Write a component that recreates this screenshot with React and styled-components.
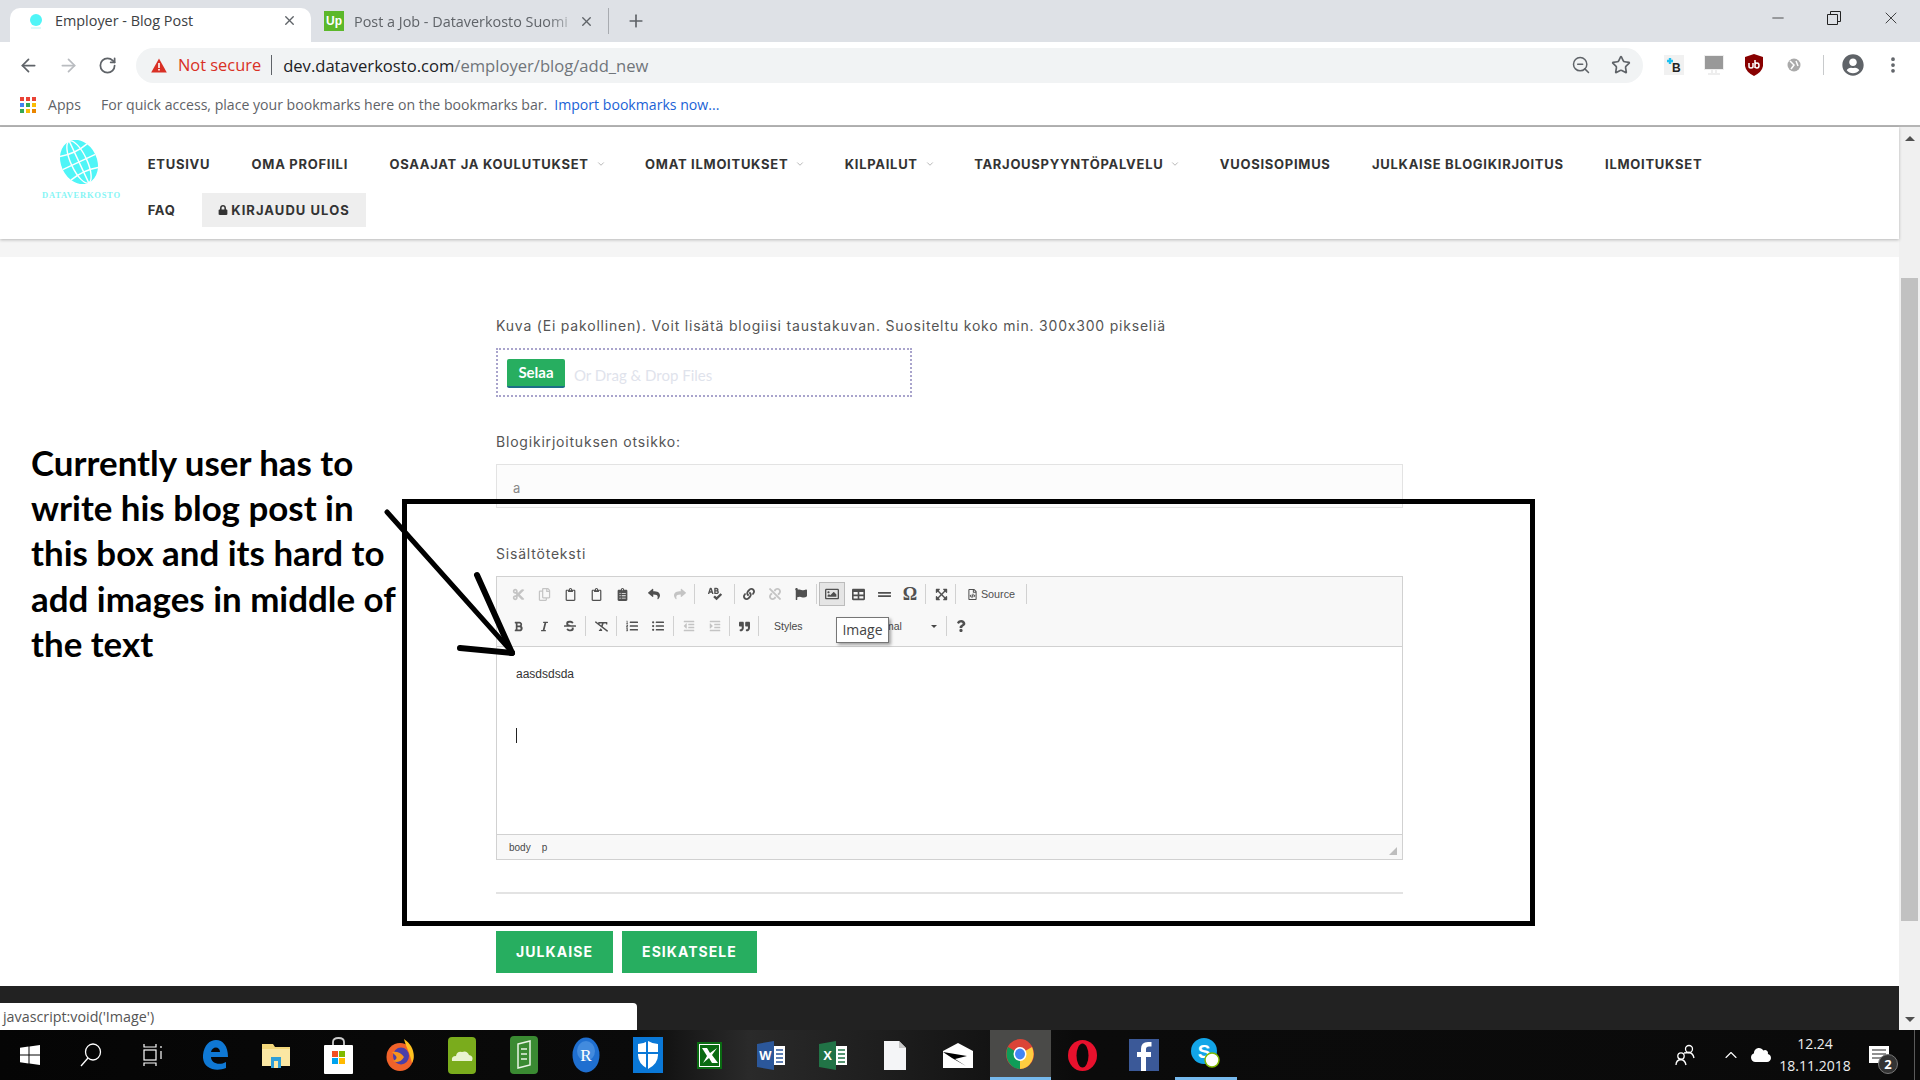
import React from 'react'
import styled, { createGlobalStyle } from 'styled-components'
import { ArrowLeft, ArrowRight, RotateCw, Star, ZoomOut, X, Plus, Minus, ChevronUp, MoreVertical, ChevronDown } from 'lucide-react'
import {
  FaCut, FaRegCopy, FaRegClipboard, FaClipboardList, FaReply, FaShare, FaSpellCheck, FaLink, FaUnlink, FaFlag, FaRegImage,
  FaTable, FaExpandArrowsAlt, FaRegFileCode, FaBold, FaItalic, FaStrikethrough, FaRemoveFormat, FaListOl, FaListUl,
  FaOutdent, FaIndent, FaQuoteRight, FaQuestion, FaGripLines, FaUserCircle, FaCloud, FaLock
} from 'react-icons/fa'

const GlobalStyle = createGlobalStyle`
  html, body {
    margin: 0;
    height: 1080px;
    overflow: hidden;
    background: #fff;
    font-family: "Open Sans", "Liberation Sans", sans-serif;
  }
  * { box-sizing: border-box; }
`

const Screen = styled.div`
  position: relative;
  width: 1920px;
  height: 1080px;
  display: flex;
  flex-direction: column;
  overflow: hidden;
`

/* browser chrome */
const TabStrip = styled.div`
  height: 42px;
  background: #dee1e6;
  display: flex;
  align-items: flex-end;
  padding-left: 10px;
  flex-shrink: 0;
`
const ActiveTab = styled.div`
  width: 301px;
  height: 34px;
  background: #fff;
  border-radius: 10px 10px 0 0;
  display: flex;
  align-items: center;
  padding: 0 14px 9px 17px;
  font-size: 14.4px;
  color: #3c4043;
`
const InactiveTab = styled.div`
  width: 298px;
  height: 26px;
  margin-bottom: 8px;
  display: flex;
  align-items: center;
  padding: 0 14px 0 13px;
  font-size: 14.4px;
  color: #5f6368;
  border-right: 1px solid #a8abb0;
`
const TabTitle = styled.span`
  flex: 1;
  margin-left: ${p => p.$indent}px;
  white-space: nowrap;
  overflow: hidden;
  mask-image: ${p => (p.$fade ? 'linear-gradient(90deg, #000 86%, transparent 100%)' : 'none')};
`
const UpFavicon = styled.span`
  width: 20px;
  height: 20px;
  background: #5cb82a;
  color: #fff;
  font: 700 12px "Liberation Sans", sans-serif;
  display: flex;
  align-items: center;
  justify-content: center;
  flex-shrink: 0;
`
const NewTab = styled.div`
  margin: 0 0 8px 17px;
  height: 26px;
  display: flex;
  align-items: center;
  color: #5f6368;
`
const WindowControls = styled.div`
  margin-left: auto;
  height: 42px;
  display: flex;
  align-items: center;
  padding-bottom: 7px;
  padding-right: 19px;
  gap: 38px;
  color: #222;
`
const Toolbar = styled.div`
  height: 44px;
  background: #fff;
  display: flex;
  align-items: center;
  padding: 2px 0 0 18px;
  flex-shrink: 0;
`
const NavButton = styled.div`
  width: 40px;
  display: flex;
  color: ${p => (p.$off ? '#b9bcc0' : '#5f6368')};
`
const Omnibox = styled.div`
  width: 1507px;
  height: 35px;
  margin-left: -2px;
  background: #f1f3f4;
  border-radius: 18px;
  display: flex;
  align-items: center;
  padding: 0 12px 0 15px;
`
const NotSecure = styled.span`
  color: #d93025;
  font-size: 16.4px;
  margin-left: 11px;
  padding-right: 10px;
  border-right: 1px solid #5f6368;
  line-height: 20px;
`
const Url = styled.span`
  color: #70757a;
  font-size: 16.6px;
  margin-left: 11px;
  flex: 1;
  b { font-weight: 400; color: #202124; }
`
const OmniIcons = styled.div`
  display: flex;
  gap: 20px;
  color: #5f6368;
`
const Extensions = styled.div`
  display: flex;
  align-items: center;
  margin-left: 11px;
`
const ExtSlot = styled.div`
  width: 40px;
  height: 24px;
  display: flex;
  align-items: center;
  justify-content: center;
  color: #5f6368;
`
const ExtDivider = styled.div`
  width: 1px;
  height: 20px;
  background: #c8cacc;
  margin: 0 9px;
`
const BookmarksBar = styled.div`
  height: 41px;
  background: #fff;
  border-bottom: 2px solid #b5b5b5;
  display: flex;
  align-items: center;
  padding: 0 0 2px 20px;
  font-size: 14.1px;
  color: #5f6368;
  flex-shrink: 0;
`
const AppsGrid = styled.div`
  width: 16px;
  height: 16px;
  display: grid;
  grid-template-columns: repeat(3, 4px);
  grid-auto-rows: 4px;
  gap: 2px;
  margin-right: 12px;
`
const AppsDot = styled.i`
  background: ${p => p.$c};
`
const BookmarkHint = styled.span`
  margin-left: 20px;
`
const ImportLink = styled.span`
  color: #1a62d6;
  margin-left: 7px;
`

/* page */
const Viewport = styled.div`
  flex: 1;
  display: flex;
  min-height: 0;
`
const Page = styled.div`
  flex: 1;
  display: flex;
  flex-direction: column;
  background: #fff;
  min-width: 0;
`
const Header = styled.header`
  height: 112px;
  display: flex;
  background: #fff;
  box-shadow: 0 1px 3px rgba(0, 0, 0, 0.25);
  position: relative;
`
const LogoBlock = styled.div`
  width: 127px;
  padding: 13px 0 0 42px;
  display: flex;
  flex-direction: column;
  align-items: flex-start;
`
const GlobeWrap = styled.div`
  margin-left: 14px;
  height: 44px;
`
const LogoText = styled.span`
  font: 700 8.5px "Liberation Serif", serif;
  letter-spacing: 0.75px;
  color: #86f5f5;
  margin-top: 6px;
  white-space: nowrap;
`
const Nav = styled.nav`
  flex: 1;
  display: flex;
  flex-wrap: wrap;
  align-content: flex-start;
  row-gap: 12px;
  padding: 20px 150px 0 0;
`
const NavItem = styled.a`
  height: 34px;
  display: flex;
  align-items: center;
  padding: 0 ${p => (p.$boxed ? 16 : 20.7)}px;
  margin-left: ${p => (p.$boxed ? 6 : 0)}px;
  background: ${p => (p.$boxed ? '#eeeeee' : 'transparent')};
  font: 700 13px "Inter", sans-serif;
  letter-spacing: ${p => (p.$boxed ? 1.05 : 0.72)}px;
  color: #333;
  white-space: nowrap;
`
const NavChevron = styled(ChevronDown)`
  margin: 0 -2px 0 7px;
`
const LockIcon = styled(FaLock)`
  margin-right: 3px;
`
const Strip = styled.div`
  height: 18px;
  background: #f5f5f5;
`
const Content = styled.main`
  flex: 1;
  padding: 59px 0 0 496px;
`
const Label = styled.div`
  font: 400 14px/20px "Inter", sans-serif;
  letter-spacing: 0.8px;
  color: #555;
  height: 20px;
  white-space: nowrap;
`
const DropZone = styled.div`
  width: 416px;
  height: 49px;
  margin: 12px 0 35px;
  border: 2px dotted #a9a4cc;
  padding: 9px;
  display: flex;
  align-items: flex-start;
`
const BrowseButton = styled.div`
  width: 58px;
  height: 29px;
  background: #27ae60;
  border-bottom: 2px solid #1c6f87;
  border-radius: 2px;
  color: #fff;
  font: 700 15px/26px "Lato", sans-serif;
  text-align: center;
`
const DropHint = styled.span`
  margin-left: 9px;
  font: 400 15px/32px "Lato", sans-serif;
  color: #dfe3ec;
`
const TitleInput = styled.div`
  width: 907px;
  height: 44px;
  margin: 12px 0 36px;
  background: #fcfcfc;
  border: 1px solid #e3e3e3;
  padding: 12px 16px;
  font: 400 13px/22px "Inter", sans-serif;
  color: #888;
`
const Editor = styled.div`
  width: 907px;
  height: 284px;
  margin-top: 12px;
  border: 1px solid #d1d1d1;
  display: flex;
  flex-direction: column;
`
const EditorTop = styled.div`
  height: 70px;
  background: #f8f8f8;
  border-bottom: 1px solid #d1d1d1;
  padding: 5px 0 0 8px;
  flex-shrink: 0;
  position: relative;
`
const ToolRow = styled.div`
  height: 24px;
  margin-bottom: 8px;
  display: flex;
  align-items: center;
`
const ToolButton = styled.span`
  width: ${p => p.$w || 26}px;
  height: 24px;
  display: flex;
  align-items: center;
  justify-content: center;
  gap: 3px;
  flex-shrink: 0;
  color: ${p => (p.$off ? '#c4c4c4' : '#505050')};
  background: ${p => (p.$on ? '#e5e5e5' : 'transparent')};
  box-shadow: ${p => (p.$on ? 'inset 0 0 0 1px #bcbcbc' : 'none')};
  font: ${p => (p.$text ? '400 10.8px "Liberation Sans", sans-serif' : '700 18px "Liberation Serif", serif')};
`
const ToolSep = styled.span`
  width: 1px;
  height: 20px;
  background: #d1d1d1;
  margin: 0 ${p => p.$m ?? 1}px;
  flex-shrink: 0;
`
const Combo = styled.span`
  width: ${p => p.$w}px;
  font: 400 10.5px "Liberation Sans", sans-serif;
  color: #474747;
  padding-left: ${p => p.$pad}px;
  flex-shrink: 0;
  display: flex;
  align-items: center;
`
const Caret = styled.i`
  width: 0;
  height: 0;
  margin-left: auto;
  margin-right: 8px;
  border-left: 3px solid transparent;
  border-right: 3px solid transparent;
  border-top: 3px solid #474747;
`
const Tooltip = styled.div`
  position: absolute;
  left: 339px;
  top: 40px;
  width: 53px;
  height: 26px;
  background: #fff;
  border: 1px solid #767676;
  box-shadow: 2px 2px 3px rgba(0, 0, 0, 0.35);
  font: 400 14px/24px "Open Sans", sans-serif;
  color: #444;
  text-align: center;
`
const EditorBody = styled.div`
  flex: 1;
  background: #fff;
  padding: 20px 19px;
  font: 400 12px/14px "Liberation Sans", sans-serif;
  color: #333;
`
const Caretbar = styled.div`
  width: 1px;
  height: 15px;
  background: #222;
  margin-top: 47px;
`
const EditorBottom = styled.div`
  height: 25px;
  background: #f8f8f8;
  border-top: 1px solid #d1d1d1;
  display: flex;
  align-items: center;
  padding: 0 5px 0 12px;
  gap: 11px;
  font: 400 10px "Liberation Sans", sans-serif;
  color: #484848;
  flex-shrink: 0;
`
const ResizeGrip = styled.i`
  margin: 8px 0 0 auto;
  width: 0;
  height: 0;
  border-left: 8px solid transparent;
  border-bottom: 8px solid #bdbdbd;
`
const Rule = styled.div`
  width: 907px;
  height: 2px;
  background: #e3e3e3;
  margin: 32px 0 37px;
`
const Actions = styled.div`
  display: flex;
  gap: 9px;
`
const ActionButton = styled.div`
  width: ${p => p.$w}px;
  height: 42px;
  background: #27ae60;
  color: #fff;
  font: 700 14px/42px "Inter", sans-serif;
  letter-spacing: 1.05px;
  text-align: center;
`
const Footer = styled.footer`
  height: 44px;
  background: #222;
  flex-shrink: 0;
`
const Scrollbar = styled.div`
  width: 21px;
  background: #f0f0f0;
  display: flex;
  flex-direction: column;
  align-items: center;
  flex-shrink: 0;
`
const ScrollThumb = styled.div`
  width: 17px;
  height: 643px;
  margin-top: 129px;
  background: #c1c1c1;
`
const ScrollEnd = styled.div`
  margin-top: ${p => (p.$bottom ? 'auto' : '0')};
  height: 22px;
  display: flex;
  align-items: center;
  &::before {
    content: '';
    border-left: 5px solid transparent;
    border-right: 5px solid transparent;
    border-bottom: ${p => (p.$bottom ? '0' : '5px solid #505050')};
    border-top: ${p => (p.$bottom ? '5px solid #505050' : '0')};
  }
`
const StatusBubble = styled.div`
  position: absolute;
  left: 0;
  top: 1003px;
  width: 637px;
  height: 27px;
  background: #fff;
  border-top-right-radius: 4px;
  padding-left: 3px;
  font: 400 14.3px/27px "Open Sans", sans-serif;
  color: #555;
`

/* annotation over the page */
const Note = styled.div`
  position: absolute;
  left: 31px;
  top: 440px;
  width: 372px;
  font: 700 34.9px/45.2px "Lato", sans-serif;
  color: #000;
`
const Frame = styled.div`
  position: absolute;
  left: 402px;
  top: 499px;
  width: 1133px;
  height: 427px;
  border: 5px solid #000;
  pointer-events: none;
`
const ArrowOverlay = styled.svg`
  position: absolute;
  left: 380px;
  top: 500px;
  width: 150px;
  height: 170px;
`

/* taskbar */
const Taskbar = styled.div`
  height: 50px;
  background: linear-gradient(90deg, #050505 0%, #0a0a0a 33%, #2a2a2a 39%, #1a1a1a 48%, #0b0b0b 56%, #0a0a0a 100%);
  display: flex;
  align-items: center;
  flex-shrink: 0;
  position: relative;
`
const TaskSlot = styled.div`
  width: ${p => p.$w || 61.85}px;
  height: 50px;
  display: flex;
  align-items: center;
  justify-content: center;
  flex-shrink: 0;
  background: ${p => (p.$active ? '#4a4a48' : 'transparent')};
  border-bottom: ${p => (p.$open ? '3px solid #76b9ed' : '0')};
  color: #fff;
`
const Tray = styled.div`
  margin: 0 5px 0 auto;
  display: flex;
  align-items: center;
  height: 50px;
  color: #fff;
  padding-right: 12px;
  border-right: 1px solid #5a5a5a;
`
const TrayChevron = styled(ChevronUp)`
  margin-left: 26px;
`
const TrayCloud = styled(FaCloud)`
  margin-left: 10px;
`
const Clock = styled.div`
  width: 82px;
  margin-left: 3px;
  text-align: center;
  font: 400 14px/22px "Open Sans", sans-serif;
  color: #eee;
`
const Notif = styled.div`
  position: relative;
  width: 46px;
  height: 50px;
  display: flex;
  align-items: center;
  padding-left: 13px;
`
const NotifBadge = styled.span`
  position: absolute;
  left: 22px;
  top: 24px;
  width: 20px;
  height: 20px;
  border-radius: 50%;
  background: #333;
  border: 1px solid #777;
  font: 700 13px/18px "Open Sans", sans-serif;
  color: #fff;
  text-align: center;
`

const Globe = () => (
  <svg width="46" height="44" viewBox="0 0 46 44">
    <g transform="rotate(-25 23 22)">
      <ellipse cx="23" cy="22" rx="18" ry="23" fill="#4ff5f7" />
      <g fill="none" stroke="#fff" strokeWidth="1.4">
        <ellipse cx="23" cy="22" rx="8" ry="23" />
        <path d="M23 -1V45" />
        <path d="M5 22H41M8 9Q23 13 38 9M8 35Q23 31 38 35" />
      </g>
    </g>
  </svg>
)

const NAV = [
  ['ETUSIVU'], ['OMA PROFIILI'], ['OSAAJAT JA KOULUTUKSET', 1], ['OMAT ILMOITUKSET', 1], ['KILPAILUT', 1],
  ['TARJOUSPYYNTÖPALVELU', 1], ['VUOSISOPIMUS'], ['JULKAISE BLOGIKIRJOITUS'], ['ILMOITUKSET'], ['FAQ'],
]

const Warn = () => (
  <svg width="16" height="15" viewBox="0 0 16 15"><path d="M8 0.5L15.8 14.5H0.2Z" fill="#d93025" /><path d="M7.2 5H8.8V10H7.2ZM7.2 11H8.8V12.6H7.2Z" fill="#fff" /></svg>
)

const Shield = () => (
  <svg width="20" height="22" viewBox="0 0 20 22">
    <path d="M10 0L19 3V12Q18 18 10 22Q2 18 1 12V3Z" fill="#800" />
    <path d="M5 9V12.5Q5 14 7 14T9 12.5V9M11 6V14M11 11Q11 9 13 9T15 11.500T13 14T11 12" fill="none" stroke="#fff" strokeWidth="1.5" />
  </svg>
)

const Monitor = () => (
  <svg width="20" height="20" viewBox="0 0 20 20">
    <rect x="0.5" y="0.5" width="19" height="14" fill="#999" stroke="#eee" />
    <path d="M8 15V18M12 15V18M4 19H16" stroke="#ddd" />
  </svg>
)

const ExtB = () => (
  <svg width="20" height="20" viewBox="0 0 20 20">
    <rect width="20" height="20" fill="#f1f1f1" />
    <path d="M6 3V9M3 6H9" stroke="#1ec0f0" strokeWidth="2.4" />
    <text x="8" y="17" fontFamily="Liberation Sans" fontWeight="700" fontSize="12" fill="#222">B</text>
  </svg>
)

const Windows = () => (
  <svg width="20" height="20" viewBox="0 0 20 20" fill="#fff">
    <path d="M0 2.800L8.500 1.600V9.500H0ZM9.500 1.500L20 0V9.500H9.500ZM0 10.500H8.500V18.400L0 17.200ZM9.500 10.500H20V20L9.500 18.500Z" />
  </svg>
)
const SearchGlass = () => (
  <svg width="22" height="24" viewBox="0 0 22 24" fill="none" stroke="#fff" strokeWidth="1.3">
    <ellipse cx="13" cy="9" rx="7.500" ry="8" />
    <path d="M8 15L1 23" />
  </svg>
)
const TaskView = () => (
  <svg width="20" height="24" viewBox="0 0 20 24" fill="none" stroke="#fff" strokeWidth="1.2">
    <rect x="1" y="7" width="12" height="10" />
    <path d="M1 1V4H13V1M1 23V20H13V23M18 3V5M18 8V16" />
  </svg>
)
const EdgeLogo = () => (
  <svg width="26" height="30" viewBox="0 0 26 30">
    <path d="M1 15C2 5 8 0 14 0C21 0 26 6 26 17H9C9 23 17 26 24 22V28C14 32 2 29 1 18C1 17 1 16 1 15ZM9 12H18C18 6 10 6 9 12Z" fill="#0f78d4" />
  </svg>
)
const Folder = () => (
  <svg width="28" height="26" viewBox="0 0 28 26">
    <path d="M0 2H11L13 5H28V24H0Z" fill="#f3d77a" />
    <path d="M0 7H28V24H0Z" fill="#fbe7a3" />
    <path d="M9 15H19V26H9Z" fill="#2f9fd8" />
    <path d="M12 19H16V26H12Z" fill="#fbe7a3" />
  </svg>
)
const Store = () => (
  <svg width="29" height="37" viewBox="0 0 29 37">
    <path d="M9 12V5Q9 1 14.500 1T20 5V12" fill="none" stroke="#ccc" strokeWidth="1.800" />
    <rect y="8" width="29" height="29" rx="1" fill="#fff" />
    <rect x="8" y="14" width="6" height="6" fill="#f25022" />
    <rect x="15" y="14" width="6" height="6" fill="#7fba00" />
    <rect x="8" y="21" width="6" height="6" fill="#00a4ef" />
    <rect x="15" y="21" width="6" height="6" fill="#ffb900" />
  </svg>
)
const Firefox = () => (
  <svg width="28" height="32" viewBox="0 0 28 32">
    <ellipse cx="14" cy="18" rx="13.500" ry="14" fill="#f0622a" />
    <path d="M18 0C27 6 30 16 26 24C24 14 20 8 18 0Z" fill="#ffc21f" />
    <ellipse cx="15" cy="17" rx="8" ry="8.500" fill="#4a3fa8" />
    <path d="M6 13Q14 12 18 18Q14 25 7 22Q12 20 10 17Q8 15 6 13Z" fill="#f7941d" />
  </svg>
)
const GreenCloud = () => (
  <svg width="28" height="37" viewBox="0 0 28 37">
    <rect width="28" height="37" rx="4" fill="#7aac1c" />
    <path d="M4 24Q3 19 8 19Q9 14 14 15Q19 13 21 18Q26 19 24 24Z" fill="#e8f3d0" />
  </svg>
)
const GreenBook = () => (
  <svg width="28" height="38" viewBox="0 0 28 38">
    <rect width="28" height="38" rx="4" fill="#3a8a32" />
    <path d="M8 8L20 5V29L8 32ZM11 13H17M11 18H17M11 23H17" fill="none" stroke="#e9f4e5" strokeWidth="1.500" />
  </svg>
)
const RLogo = () => (
  <svg width="28" height="36" viewBox="0 0 28 36">
    <ellipse cx="14" cy="18" rx="13.500" ry="17.500" fill="#1f6fd0" />
    <ellipse cx="14" cy="14" rx="9" ry="10" fill="#5fa2ea" opacity="0.55" />
    <text x="14" y="24" textAnchor="middle" fontFamily="Liberation Serif" fontSize="17" fill="#fff">R</text>
  </svg>
)
const Defender = () => (
  <svg width="30" height="36" viewBox="0 0 30 36">
    <rect width="30" height="36" fill="#0a78d7" />
    <path d="M15 4Q20 7 25 7V18Q25 27 15 32Q5 27 5 18V7Q10 7 15 4Z" fill="#fff" />
    <path d="M14 4V32M5 16H25" stroke="#0a78d7" strokeWidth="2" />
  </svg>
)
const ExcelOld = () => (
  <svg width="25" height="27" viewBox="0 0 25 27">
    <rect x="1" y="1" width="23" height="25" fill="#fff" stroke="#0a6b12" strokeWidth="2" />
    <path d="M3 3H22V24H3Z" fill="#0a6b12" />
    <path d="M5 6H10L13 11L20 6L15 13L21 21H15L12 16L6 21L10 14Z" fill="#fff" />
  </svg>
)
const OfficeDoc = ({ color, letter }) => (
  <svg width="28" height="29" viewBox="0 0 28 29">
    <path d="M16 5H28V24H16Z" fill="#fff" />
    <path d="M19 9H26M19 13H26M19 17H26M19 21H26" stroke={color} strokeWidth="1.500" />
    <path d="M0 3L17 0V29L0 26Z" fill={color} />
    <text x="8.500" y="19" textAnchor="middle" fontFamily="Liberation Sans" fontWeight="700" fontSize="13" fill="#fff">{letter}</text>
  </svg>
)
const BlankDoc = () => (
  <svg width="22" height="29" viewBox="0 0 22 29">
    <path d="M0 0H15L22 7V29H0Z" fill="#f4f5f7" />
    <path d="M15 0L22 7H15Z" fill="#c8c8c8" />
  </svg>
)
const Mail = () => (
  <svg width="30" height="25" viewBox="0 0 30 25">
    <path d="M0 8L15 0L30 8V25H0Z" fill="#fff" />
    <path d="M0 9L24 13L12 16L23 23L9 15Z" fill="#000" />
  </svg>
)
const Chrome = () => (
  <svg width="28" height="30" viewBox="0 0 28 30">
    <ellipse cx="14" cy="15" rx="14" ry="15" fill="#db4437" />
    <path d="M14 15L2 8A14 15 0 0 0 14 30Z" fill="#0f9d58" />
    <path d="M14 15L26 8A14 15 0 0 1 14 30Z" fill="#ffcd40" />
    <ellipse cx="14" cy="15" rx="6.500" ry="7" fill="#fff" />
    <ellipse cx="14" cy="15" rx="5" ry="5.400" fill="#4285f4" />
  </svg>
)
const Opera = () => (
  <svg width="29" height="31" viewBox="0 0 29 31">
    <ellipse cx="14.500" cy="15.500" rx="14.500" ry="15.500" fill="#e8112d" />
    <ellipse cx="14.500" cy="15.500" rx="6" ry="12" fill="#0a0a0a" />
  </svg>
)
const FacebookTile = () => (
  <svg width="30" height="32" viewBox="0 0 30 32">
    <rect width="30" height="32" fill="#3b5998" />
    <path d="M17 32V18H22V13H17V10Q17 7.500 20 7.500H22.500V3H19Q12 3 12 10V13H8V18H12V32Z" fill="#fff" />
  </svg>
)
const Skype = () => (
  <svg width="29" height="31" viewBox="0 0 29 31">
    <circle cx="13" cy="13" r="13" fill="#12a5e8" />
    <text x="13" y="20" textAnchor="middle" fontFamily="Liberation Sans" fontWeight="700" fontSize="19" fill="#fff">S</text>
    <circle cx="21" cy="22" r="7" fill="#fff" stroke="#7fb900" strokeWidth="1.500" />
  </svg>
)
const People = () => (
  <svg width="20" height="22" viewBox="0 0 20 22" fill="none" stroke="#fff" strokeWidth="1.300">
    <circle cx="14" cy="5" r="3.500" />
    <circle cx="6" cy="12" r="3.200" />
    <path d="M1 21Q1 16 6 15.500Q10 16 11 21M9 9Q12 8.500 14 8.500Q18 9 19 14" />
  </svg>
)
const NotifIcon = () => (
  <svg width="20" height="18" viewBox="0 0 20 18">
    <rect width="20" height="17" fill="#fff" />
    <path d="M3 4H17M3 8H17M3 12H17" stroke="#222" strokeWidth="1.200" />
  </svg>
)

export default function App() {
  return (
    <Screen>
      <GlobalStyle />
      <TabStrip>
        <ActiveTab>
          <svg width="18" height="18" viewBox="0 0 18 18"><circle cx="9" cy="8" r="6" fill="#4ff5f7" /><path d="M4 16H14" stroke="#b8f5f5" /></svg>
          <TabTitle $indent={10}>Employer - Blog Post</TabTitle>
          <X size={15} strokeWidth={2.2} color="#5f6368" />
        </ActiveTab>
        <InactiveTab>
          <UpFavicon>Up</UpFavicon>
          <TabTitle $indent={10} $fade>Post a Job - Dataverkosto Suomi</TabTitle>
          <X size={15} strokeWidth={2.2} color="#5f6368" />
        </InactiveTab>
        <NewTab><Plus size={20} strokeWidth={2} /></NewTab>
        <WindowControls>
          <Minus size={18} strokeWidth={1} />
          <svg width="18" height="18" viewBox="0 0 18 18" fill="none" stroke="#222"><path d="M2.500 5.500H12.500V15.500H2.500ZM5.500 5.500V2.500H15.500V12.500H12.500" /></svg>
          <X size={20} strokeWidth={1} />
        </WindowControls>
      </TabStrip>
      <Toolbar>
        <NavButton><ArrowLeft size={21} strokeWidth={2} /></NavButton>
        <NavButton $off><ArrowRight size={21} strokeWidth={2} /></NavButton>
        <NavButton><RotateCw size={19} strokeWidth={2.2} /></NavButton>
        <Omnibox>
          <Warn />
          <NotSecure>Not secure</NotSecure>
          <Url><b>dev.dataverkosto.com</b>/employer/blog/add_new</Url>
          <OmniIcons>
            <ZoomOut size={20} strokeWidth={1.8} />
            <Star size={20} strokeWidth={2} />
          </OmniIcons>
        </Omnibox>
        <Extensions>
          <ExtSlot><ExtB /></ExtSlot>
          <ExtSlot><Monitor /></ExtSlot>
          <ExtSlot><Shield /></ExtSlot>
          <ExtSlot>
            <svg width="14" height="14" viewBox="0 0 14 14"><circle cx="7" cy="7" r="6.500" fill="#aaa" /><path d="M3 3L7 7L4 11M9 3L11 8" stroke="#fff" strokeWidth="1.500" fill="none" /></svg>
          </ExtSlot>
          <ExtDivider />
          <ExtSlot><FaUserCircle size={22} /></ExtSlot>
          <ExtSlot><MoreVertical size={20} strokeWidth={2.5} /></ExtSlot>
        </Extensions>
      </Toolbar>
      <BookmarksBar>
        <AppsGrid>
          {['#ea4335', '#ea4335', '#ea4335', '#4285f4', '#34a853', '#fbbc05', '#34a853', '#fbbc05', '#ea8600'].map((c, i) => <AppsDot key={i} $c={c} />)}
        </AppsGrid>
        Apps
        <BookmarkHint>For quick access, place your bookmarks here on the bookmarks bar.</BookmarkHint>
        <ImportLink>Import bookmarks now...</ImportLink>
      </BookmarksBar>

      <Viewport>
        <Page>
          <Header>
            <LogoBlock>
              <GlobeWrap><Globe /></GlobeWrap>
              <LogoText>DATAVERKOSTO</LogoText>
            </LogoBlock>
            <Nav>
              {NAV.map(([label, drop]) => (
                <NavItem key={label}>
                  {label}
                  {drop && <NavChevron size={10} color="#aaa" />}
                </NavItem>
              ))}
              <NavItem $boxed><LockIcon size={10} />KIRJAUDU ULOS</NavItem>
            </Nav>
          </Header>
          <Strip />
          <Content>
            <Label>Kuva (Ei pakollinen). Voit lisätä blogiisi taustakuvan. Suositeltu koko min. 300x300 pikseliä</Label>
            <DropZone>
              <BrowseButton>Selaa</BrowseButton>
              <DropHint>Or Drag &amp; Drop Files</DropHint>
            </DropZone>
            <Label>Blogikirjoituksen otsikko:</Label>
            <TitleInput>a</TitleInput>
            <Label>Sisältöteksti</Label>
            <Editor>
              <EditorTop>
                <ToolRow>
                  <ToolButton $off><FaCut size={13} /></ToolButton>
                  <ToolButton $off><FaRegCopy size={13} /></ToolButton>
                  <ToolButton><FaRegClipboard size={13} /></ToolButton>
                  <ToolButton><FaRegClipboard size={13} /></ToolButton>
                  <ToolButton><FaClipboardList size={13} /></ToolButton>
                  <ToolButton $w={6} />
                  <ToolButton><FaReply size={12} /></ToolButton>
                  <ToolButton $off><FaShare size={12} /></ToolButton>
                  <ToolSep />
                  <ToolButton $w={37}><FaSpellCheck size={14} /></ToolButton>
                  <ToolSep />
                  <ToolButton><FaLink size={12} /></ToolButton>
                  <ToolButton $off><FaUnlink size={12} /></ToolButton>
                  <ToolButton><FaFlag size={12} /></ToolButton>
                  <ToolSep $m={2} />
                  <ToolButton $on><FaRegImage size={14} /></ToolButton>
                  <ToolButton><FaTable size={13} /></ToolButton>
                  <ToolButton><FaGripLines size={13} /></ToolButton>
                  <ToolButton>Ω</ToolButton>
                  <ToolSep $m={2} />
                  <ToolButton><FaExpandArrowsAlt size={13} /></ToolButton>
                  <ToolSep />
                  <ToolButton $w={68} $text><FaRegFileCode size={11} />Source</ToolButton>
                  <ToolSep />
                </ToolRow>
                <ToolRow>
                  <ToolButton><FaBold size={11} /></ToolButton>
                  <ToolButton><FaItalic size={11} /></ToolButton>
                  <ToolButton><FaStrikethrough size={12} /></ToolButton>
                  <ToolSep $m={2} />
                  <ToolButton><FaRemoveFormat size={13} /></ToolButton>
                  <ToolSep $m={2} />
                  <ToolButton><FaListOl size={12} /></ToolButton>
                  <ToolButton><FaListUl size={12} /></ToolButton>
                  <ToolSep $m={2} />
                  <ToolButton $off><FaOutdent size={12} /></ToolButton>
                  <ToolButton $off><FaIndent size={12} /></ToolButton>
                  <ToolSep />
                  <ToolButton><FaQuoteRight size={11} /></ToolButton>
                  <ToolSep />
                  <Combo $w={86} $pad={14}>Styles</Combo>
                  <Combo $w={99} $pad={22}>Normal<Caret /></Combo>
                  <ToolSep />
                  <ToolButton><FaQuestion size={12} /></ToolButton>
                </ToolRow>
                <Tooltip>Image</Tooltip>
              </EditorTop>
              <EditorBody>
                aasdsdsda
                <Caretbar />
              </EditorBody>
              <EditorBottom>
                <span>body</span>
                <span>p</span>
                <ResizeGrip />
              </EditorBottom>
            </Editor>
            <Rule />
            <Actions>
              <ActionButton $w={117}>JULKAISE</ActionButton>
              <ActionButton $w={135}>ESIKATSELE</ActionButton>
            </Actions>
          </Content>
          <Footer />
        </Page>
        <Scrollbar>
          <ScrollEnd />
          <ScrollThumb />
          <ScrollEnd $bottom />
        </Scrollbar>
      </Viewport>

      <Taskbar>
        <TaskSlot $w={60}><Windows /></TaskSlot>
        <TaskSlot><SearchGlass /></TaskSlot>
        <TaskSlot><TaskView /></TaskSlot>
        <TaskSlot><EdgeLogo /></TaskSlot>
        <TaskSlot><Folder /></TaskSlot>
        <TaskSlot><Store /></TaskSlot>
        <TaskSlot><Firefox /></TaskSlot>
        <TaskSlot><GreenCloud /></TaskSlot>
        <TaskSlot><GreenBook /></TaskSlot>
        <TaskSlot><RLogo /></TaskSlot>
        <TaskSlot><Defender /></TaskSlot>
        <TaskSlot><ExcelOld /></TaskSlot>
        <TaskSlot><OfficeDoc color="#2b579a" letter="W" /></TaskSlot>
        <TaskSlot><OfficeDoc color="#217346" letter="X" /></TaskSlot>
        <TaskSlot><BlankDoc /></TaskSlot>
        <TaskSlot $w={63.7}><Mail /></TaskSlot>
        <TaskSlot $active $open><Chrome /></TaskSlot>
        <TaskSlot><Opera /></TaskSlot>
        <TaskSlot><FacebookTile /></TaskSlot>
        <TaskSlot $open><Skype /></TaskSlot>
        <Tray>
          <People />
          <TrayChevron size={20} strokeWidth={1.3} />
          <TrayCloud size={20} />
          <Clock>12.24<br />18.11.2018</Clock>
          <Notif>
            <NotifIcon />
            <NotifBadge>2</NotifBadge>
          </Notif>
        </Tray>
      </Taskbar>

      <StatusBubble>javascript:void('Image')</StatusBubble>
      <Note>Currently user has to write his blog post in this box and its hard to add images in middle of the text</Note>
      <Frame />
      <ArrowOverlay viewBox="380 500 150 170">
        <g stroke="#000" strokeWidth="5" strokeLinecap="round" fill="none">
          <path d="M387 512L512 652" />
          <path d="M477 575L512 653" strokeWidth="6" />
          <path d="M460 648L512 653" strokeWidth="6" />
        </g>
      </ArrowOverlay>
    </Screen>
  )
}
